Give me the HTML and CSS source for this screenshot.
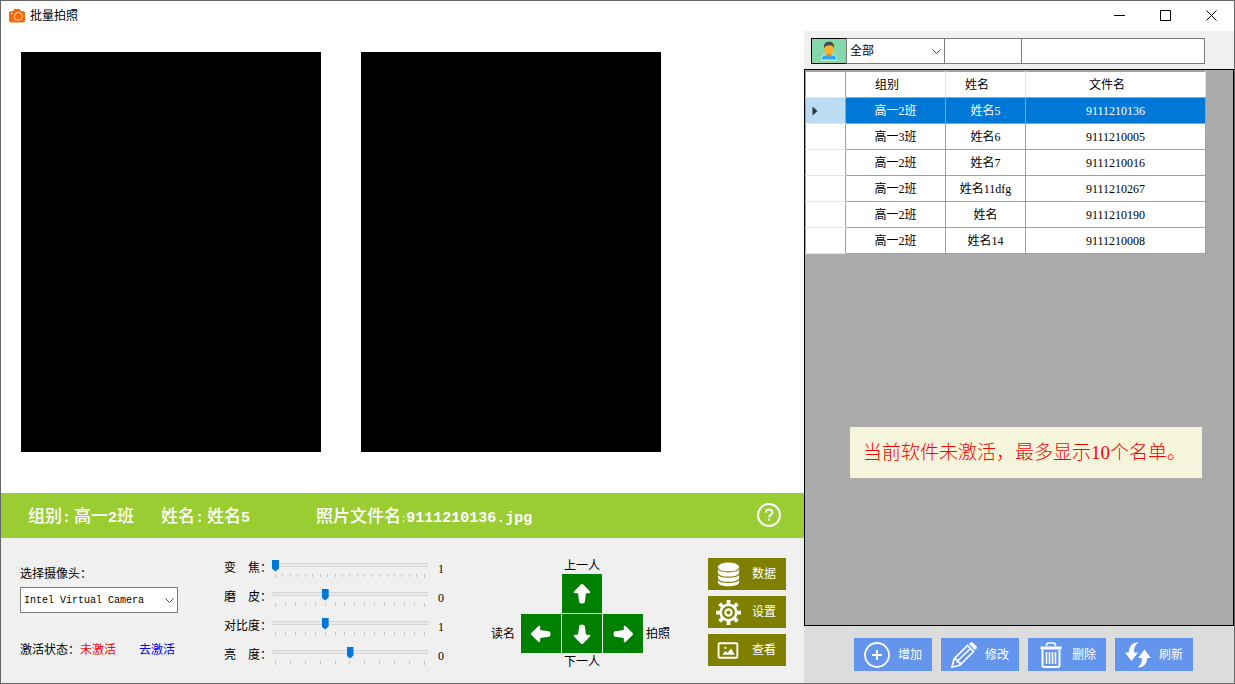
FILE: index.html
```html
<!DOCTYPE html>
<html lang="zh-CN">
<head>
<meta charset="utf-8">
<title>批量拍照</title>
<link rel="stylesheet" href="styles.css">
</head>
<body>
<div class="window">
  <header class="titlebar">
    <svg class="app-icon" viewBox="0 0 16 14" aria-hidden="true">
      <path d="M4 2.2 5.2 0h5.6L12 2.2h2.2c1 0 1.8.8 1.8 1.8v7.6c0 1-.8 1.8-1.8 1.8H1.8C.8 13.400 0 12.600 0 11.600V4c0-1 .8-1.800 1.800-1.800z" fill="#f26a0f"/>
      <circle cx="9.300" cy="7.400" r="3.900" fill="none" stroke="#ffd9bd"/>
      <path d="M2 4.500h2" stroke="#ffd9bd"/>
    </svg>
    <h1 class="title">批量拍照</h1>
    <div class="window-buttons">
      <button class="window-button" aria-label="最小化"><svg viewBox="0 0 11 11"><path d="M0 5.500h11"/></svg></button>
      <button class="window-button" aria-label="最大化"><svg viewBox="0 0 11 11"><path d="M.5.500h10v10H.5z"/></svg></button>
      <button class="window-button" aria-label="关闭"><svg viewBox="0 0 11 11"><path d="m.5.500 10 10M10.500.500l-10 10"/></svg></button>
    </div>
  </header>

  <main class="capture">
    <section class="stage">
      <div class="photo"></div>
      <div class="photo"></div>
    </section>

    <section class="info">
      <p class="info-item">组别<b>:</b><span>高一<b>2</b>班</span></p>
      <p class="info-item">姓名<b>:</b><span>姓名<b>5</b></span></p>
      <p class="info-item">照片文件名<small>:</small><b>9111210136.jpg</b></p>
      <button class="help" aria-label="帮助">
        <svg viewBox="0 0 24 24"><circle cx="12" cy="12" r="11"/><path d="M8.800 9.600c0-4.200 6.600-4.100 6.600-.2 0 2.400-3.300 2.500-3.300 4.900"/><path d="M12.100 15.600v2"/></svg>
      </button>
    </section>

    <section class="controls">
      <div class="camera">
        <label for="camera">选择摄像头：</label>
        <div class="dropdown">
          <select id="camera" class="camera-select"><option>Intel Virtual Camera</option></select>
          <svg class="chevron" viewBox="0 0 9 5" aria-hidden="true"><path d="m.5.500 4 4 4-4"/></svg>
        </div>
        <p class="activation">激活状态：<span class="inactive">未激活</span><a href="#" class="activate">去激活</a></p>
      </div>

      <div class="sliders">
        <div class="slider-row">
          <label for="zoom">变　焦：</label>
          <div class="slider">
            <input type="range" id="zoom" min="0" max="20" value="0">
            <div class="ticks"><i></i><i></i><i></i><i></i><i></i><i></i><i></i><i></i><i></i><i></i><i></i><i></i><i></i><i></i><i></i><i></i><i></i><i></i><i></i><i></i><i></i></div>
          </div>
          <output for="zoom">1</output>
        </div>
        <div class="slider-row">
          <label for="smooth">磨　皮：</label>
          <div class="slider">
            <input type="range" id="smooth" min="0" max="15" value="5">
            <div class="ticks"><i></i><i></i><i></i><i></i><i></i><i></i><i></i><i></i><i></i><i></i><i></i><i></i><i></i><i></i><i></i><i></i></div>
          </div>
          <output for="smooth">0</output>
        </div>
        <div class="slider-row">
          <label for="contrast">对比度：</label>
          <div class="slider">
            <input type="range" id="contrast" min="0" max="15" value="5">
            <div class="ticks"><i></i><i></i><i></i><i></i><i></i><i></i><i></i><i></i><i></i><i></i><i></i><i></i><i></i><i></i><i></i><i></i></div>
          </div>
          <output for="contrast">1</output>
        </div>
        <div class="slider-row">
          <label for="brightness">亮　度：</label>
          <div class="slider">
            <input type="range" id="brightness" min="0" max="10" value="5">
            <div class="ticks"><i></i><i></i><i></i><i></i><i></i><i></i><i></i><i></i><i></i><i></i><i></i></div>
          </div>
          <output for="brightness">0</output>
        </div>
      </div>

      <div class="pad">
        <label class="pad-top" for="prev">上一人</label>
        <button class="arrow arrow-up" id="prev"><svg viewBox="0 0 20 20"><path d="M10 0q.6 0 1.200.600l6.800 6.900q1 1.700-1 1.700H14L12.800 18q-.3 1.500-2.800 1.500T7.200 18L6 9.200H3q-2 0-1-1.700L8.800.600Q9.400 0 10 0z"/></svg></button>
        <label class="pad-left" for="read">读名</label>
        <button class="arrow" id="read"><svg viewBox="0 0 20 20"><path transform="rotate(-90 10 10)" d="M10 0q.6 0 1.200.600l6.800 6.900q1 1.700-1 1.700H14L12.800 18q-.3 1.500-2.800 1.500T7.200 18L6 9.200H3q-2 0-1-1.700L8.800.600Q9.400 0 10 0z"/></svg></button>
        <button class="arrow" id="next"><svg viewBox="0 0 20 20"><path transform="rotate(180 10 10)" d="M10 0q.6 0 1.200.600l6.800 6.900q1 1.700-1 1.700H14L12.800 18q-.3 1.500-2.800 1.500T7.200 18L6 9.200H3q-2 0-1-1.700L8.800.600Q9.400 0 10 0z"/></svg></button>
        <button class="arrow" id="shoot"><svg viewBox="0 0 20 20"><path transform="rotate(90 10 10)" d="M10 0q.6 0 1.200.600l6.800 6.900q1 1.700-1 1.700H14L12.800 18q-.3 1.500-2.800 1.500T7.200 18L6 9.200H3q-2 0-1-1.700L8.800.600Q9.400 0 10 0z"/></svg></button>
        <label class="pad-right" for="shoot">拍照</label>
        <label class="pad-bottom" for="next">下一人</label>
      </div>

      <div class="tools">
        <button class="tool">
          <svg viewBox="0 0 24 26"><path fill="#fff" d="M1 5v16c0 5.600 22 5.600 22 0V5z"/><ellipse cx="12" cy="5" rx="11" ry="4.500" fill="#fff"/><path d="M1 6.500c1 5 21 5 22 0M1 12c1 5 21 5 22 0M1 17.500c1 5 21 5 22 0" fill="none" stroke="#808000" stroke-width="1.300"/></svg>
          数据
        </button>
        <button class="tool">
          <svg viewBox="0 0 24 24" fill="none" stroke="#fff"><circle cx="12" cy="12" r="7.500" stroke-width="2.500"/><circle cx="12" cy="12" r="3" stroke-width="2.300"/><path stroke-width="3.600" d="M12 0v4M12 20v4M0 12h4M20 12h4M3.500 3.500l2.800 2.800M17.700 17.700l2.800 2.800M20.500 3.500l-2.800 2.800M6.300 17.700l-2.800 2.800"/></svg>
          设置
        </button>
        <button class="tool">
          <svg viewBox="0 0 24 24"><rect x="2.500" y="5" width="18" height="14" rx="1" fill="none" stroke="#fff" stroke-width="1.800"/><path d="m6 16 3-3.500 2 1.700 3.500-4.200 3.500 6z" fill="#fff"/><circle cx="9" cy="9.500" r="1" fill="#fff"/></svg>
          查看
        </button>
      </div>
    </section>
  </main>

  <aside class="roster">
    <form class="filters">
      <button type="button" class="person" aria-label="人员">
        <svg viewBox="0 0 16 20"><path d="M0 19c0-4 3-5.500 8-5.500s8 1.500 8 5.500z" fill="#20a8f4" stroke="#e6f7ee"/><path d="M5.500 11h5v3.500L8 16l-2.500-1.500z" fill="#f58a1f"/><path d="M3.500 5v4c0 5 9 5 9 0V5z" fill="#ffb32c"/><path d="M3.300 7.500C2 2.500 5 .7 8 .7s6 1.800 4.700 6.800c-.6-2.500-1.500-3.300-3-3.300-2.400.5-5.400-.5-6.400 3.300z" fill="#474b55"/></svg>
      </button>
      <div class="dropdown group-filter">
        <select class="group-select" aria-label="组别"><option>全部</option></select>
        <svg class="chevron" viewBox="0 0 9 5" aria-hidden="true"><path d="m.5.500 4 4 4-4"/></svg>
      </div>
      <input class="filter name-filter" type="text" aria-label="姓名">
      <input class="filter file-filter" type="text" aria-label="文件名">
    </form>

    <div class="grid">
      <table>
        <thead>
          <tr><th class="marker"></th><th class="group">组别</th><th class="name">姓名</th><th class="file">文件名</th></tr>
        </thead>
        <tbody>
          <tr class="selected"><td class="marker"><svg viewBox="0 0 6 10"><path d="M.5.500 5.500 5l-5 4.500z"/></svg></td><td>高一2班</td><td>姓名5</td><td>9111210136</td></tr>
          <tr><td class="marker"></td><td>高一3班</td><td>姓名6</td><td>9111210005</td></tr>
          <tr><td class="marker"></td><td>高一2班</td><td>姓名7</td><td>9111210016</td></tr>
          <tr><td class="marker"></td><td>高一2班</td><td>姓名11dfg</td><td>9111210267</td></tr>
          <tr><td class="marker"></td><td>高一2班</td><td>姓名</td><td>9111210190</td></tr>
          <tr><td class="marker"></td><td>高一2班</td><td>姓名14</td><td>9111210008</td></tr>
        </tbody>
      </table>
      <p class="notice">当前软件未激活，最多显示10个名单。</p>
    </div>

    <footer class="actions">
      <button class="action">
        <svg viewBox="0 0 26 26"><circle cx="13" cy="13" r="12" stroke-width="1.800"/><path stroke-width="2" d="M13 8v10M8 13h10"/></svg>
        增加
      </button>
      <button class="action">
        <svg viewBox="0 0 26 26"><path stroke-width="1.700" d="M1 25.200 3 17 16.500 3.500l6 6L9 23zM3 17l2.500.500 1 2.500 2.200.500.300 2.500M6.500 19 19.500 6.500"/><path d="m18 2 1.500-1.500q1.200-.8 2.500.4l3.200 3.200q1.200 1.300.3 2.500L24 8z" fill="#fff" stroke="none"/></svg>
        修改
      </button>
      <button class="action">
        <svg viewBox="0 0 26 26"><path stroke-width="1.600" d="M8.500 4q0-3 2-3h5q2 0 2 3"/><path stroke-width="3" d="M2.500 6h21"/><path stroke-width="2" d="M4.500 8v15q0 2 2 2h13q2 0 2-2V8"/><path stroke-width="1.600" d="M8.500 10v12M11.500 10v12M14.500 10v12M17.500 10v12"/></svg>
        删除
      </button>
      <button class="action">
        <svg viewBox="0 0 26 26"><path fill="#fff" stroke="none" d="M13.500.5C8 0 4 4 3.800 10.500H0L6.500 19 13 10.500H9.200C8.800 6 10 3 13.500.500zM12.500 25.500c5.500.5 9.500-3.500 9.700-9.500H26L19.500 7.500 13 16h3.800c.4 4.500-.8 7-4.300 9.500z"/></svg>
        刷新
      </button>
    </footer>
  </aside>
</div>
</body>
</html>
```
FILE: styles.css
```css
* {
  box-sizing: border-box;
}

body {
  margin: 0;
  font: 12px/16px "Liberation Serif", "Noto Sans CJK SC", sans-serif;
  color: #000;
}

h1, p {
  margin: 0;
}

button, input, select {
  margin: 0;
  padding: 0;
  border: 0;
  border-radius: 0;
  font: inherit;
  color: inherit;
}

.window {
  display: grid;
  grid-template-columns: minmax(0, 1fr) 430px;
  grid-template-rows: 30px 1fr;
  min-height: 100vh;
  border: 1px solid #666;
  background: #f0f0f0;
}

/* Title bar */
.titlebar {
  grid-column: 1 / -1;
  display: flex;
  align-items: center;
  padding-left: 8px;
  background: #fff;
}

.app-icon {
  width: 16px;
  height: 14px;
}

.title {
  margin-left: 5px;
  font-size: 12px;
  font-weight: 400;
}

.window-buttons {
  display: flex;
  height: 100%;
  margin-left: auto;
}

.window-button {
  display: grid;
  place-items: center;
  width: 46px;
  padding-bottom: 2px;
  background: none;
}

.window-button svg {
  width: 11px;
  height: 11px;
  fill: none;
  stroke: #000;
}

/* Photo area */
.capture {
  display: flex;
  flex-direction: column;
}

.stage {
  display: flex;
  flex: 1;
  gap: 40px;
  padding: 21px 20px 40px;
  background: #fff;
}

.photo {
  width: 300px;
  height: 400px;
  background: #000;
}

.info {
  display: grid;
  grid-template-columns: 133px 155px 1fr auto;
  align-items: center;
  height: 45px;
  padding: 0 23px 2px 27px;
  background: #9acd32;
  color: #fff;
  font-size: 17px;
  line-height: 24px;
  font-weight: 500;
}

.info-item {
  padding-top: 6px;
  white-space: nowrap;
}

.info-item b {
  font-family: "Liberation Mono", monospace;
  font-size: 15px;
}

.info-item span {
  margin-left: 3px;
}

.info-item small {
  padding: 0 1px;
  font-size: 12px;
}

.help {
  display: grid;
  width: 24px;
  height: 24px;
  background: none;
}

.help svg {
  fill: none;
  stroke: #fff;
  stroke-width: 2;
}

/* Controls */
.controls {
  display: flex;
  align-items: flex-start;
  padding: 20px 18px 9px 19px;
}

.camera {
  display: flex;
  flex-direction: column;
  width: 158px;
  padding-top: 8px;
}

.dropdown {
  position: relative;
}

.dropdown select {
  width: 100%;
  height: 26px;
  border: 1px solid #7a7a7a;
  background: #fff;
  appearance: none;
}

.dropdown .camera-select {
  padding-left: 3px;
  font: 10px "Liberation Mono", monospace;
}

.dropdown .group-select {
  padding-left: 3px;
}

.chevron {
  position: absolute;
  right: 4px;
  top: 11px;
  width: 9px;
  height: 5px;
  fill: none;
  stroke: #444;
  pointer-events: none;
}

.camera .dropdown {
  margin-top: 5px;
}

.activation {
  margin-top: 29px;
}

.inactive {
  color: #f00;
}

.activate {
  margin-left: 23px;
  color: #00f;
  text-decoration: none;
}

.sliders {
  margin-left: 46px;
}

.slider-row {
  display: grid;
  grid-template-columns: 48px 156px 16px;
  height: 29px;
}

.slider-row label {
  padding-top: 2px;
}

.slider-row output {
  padding: 3px 0 0 10px;
}

.slider input {
  display: block;
  width: 100%;
  height: 13px;
  background: none;
  appearance: none;
}

.slider input::-webkit-slider-runnable-track {
  height: 4px;
  background: #e7eaea;
  box-shadow: inset 0 0 0 1px #d6d6d6;
}

.slider input::-webkit-slider-thumb {
  width: 7px;
  height: 12px;
  margin-top: -3px;
  background: #0078d7;
  clip-path: polygon(0 0, 100% 0, 100% 75%, 50% 100%, 0 75%);
  appearance: none;
}

.ticks {
  display: flex;
  justify-content: space-between;
  padding: 3px 3px 0;
}

.ticks i {
  width: 1px;
  height: 3px;
  background: #c4c4c4;
}

.ticks i:first-child,
.ticks i:last-child {
  height: 4px;
}

.pad {
  display: grid;
  grid-template-columns: 29px repeat(3, 40px) auto;
  grid-template-rows: 15px 39px 39px 16px;
  align-items: center;
  gap: 1px;
  margin-left: 47px;
}

.pad-top,
.pad-bottom {
  grid-column: 3;
  text-align: center;
}

.pad-left {
  grid-column: 1;
}

.pad-right {
  padding-left: 2px;
}

.arrow-up {
  grid-column: 3;
}

.arrow {
  display: grid;
  place-items: center;
  height: 100%;
  background: #008000;
}

.arrow svg {
  width: 20px;
  height: 20px;
  fill: #fff;
}

.tools {
  display: grid;
  gap: 6px;
  margin-left: auto;
}

.tool {
  display: flex;
  align-items: center;
  justify-content: space-between;
  width: 78px;
  height: 32px;
  padding: 0 10px 0 8px;
  background: #808000;
  color: #fff;
}

.tool svg {
  width: 25px;
  height: 25px;
}

/* Roster */
.roster {
  display: flex;
  flex-direction: column;
}

.filters {
  display: flex;
  padding: 7px 29px 5px 7px;
}

.person {
  display: grid;
  place-items: center;
  width: 36px;
  border: 1px solid #000;
  background: #85d8a9;
}

.person svg {
  width: 16px;
  height: 20px;
}

.group-filter {
  width: 99px;
  margin-left: -1px;
}

.filter {
  min-width: 0;
  height: 26px;
  margin-left: -1px;
  border: 1px solid #7a7a7a;
  background: #fff;
}

.name-filter {
  width: 78px;
}

.file-filter {
  flex: 1;
}

.grid {
  position: relative;
  flex: 1;
  padding-top: 1px;
  border: 1px solid #000;
  background: #ababab;
}

table {
  border-collapse: collapse;
  background: #fff;
}

th, td {
  height: 26px;
  padding: 0;
  border: 1px solid #a0a0a0;
  font-weight: 400;
  text-align: center;
}

th {
  padding-right: 17px;
  border-right-color: #e5e5e5;
}

.marker {
  width: 40px;
  padding: 0 0 0 6px;
  border-top-color: #e5e5e5;
  border-bottom-color: #e5e5e5;
}

th.marker {
  border-top-color: #a0a0a0;
  border-right-color: #a0a0a0;
}

.group {
  width: 100px;
}

.name {
  width: 80px;
}

.file {
  width: 180px;
}

.marker svg {
  display: block;
  width: 6px;
  height: 10px;
  fill: #333;
}

.selected {
  background: #0078d7;
  color: #fff;
}

.selected .marker {
  background: #bcdcf4;
}

.notice {
  position: absolute;
  right: 31px;
  bottom: 147px;
  left: 45px;
  padding: 13px 13px 12px;
  background: #f5f5dc;
  color: #f00;
  font-size: 19px;
  line-height: 26px;
  font-weight: 300;
  white-space: nowrap;
}

.actions {
  display: flex;
  justify-content: flex-end;
  gap: 9px;
  padding: 12px 41px;
  background: #dcdcdc;
}

.action {
  display: flex;
  align-items: center;
  justify-content: space-between;
  width: 78px;
  height: 33px;
  padding: 0 10px;
  background: #6495ed;
  color: #fff;
}

.action svg {
  width: 26px;
  height: 26px;
  fill: none;
  stroke: #fff;
}
```
